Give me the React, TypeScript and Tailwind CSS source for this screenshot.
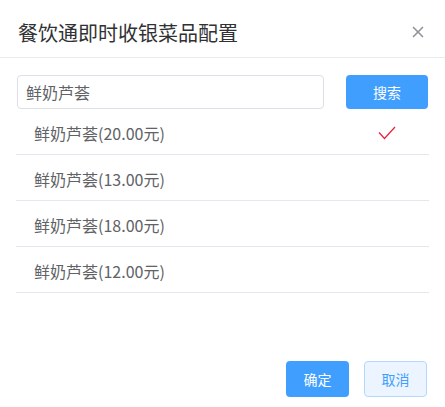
import { X } from "lucide-react";

const dishes = [
  { id: 1, name: "鲜奶芦荟", price: "20.00", checked: true },
  { id: 2, name: "鲜奶芦荟", price: "13.00", checked: false },
  { id: 3, name: "鲜奶芦荟", price: "18.00", checked: false },
  { id: 4, name: "鲜奶芦荟", price: "12.00", checked: false },
];

const font = { fontFamily: '"Noto Sans CJK SC", "Noto Sans", sans-serif' };

export default function App() {
  return (
    <div className="flex h-[407px] w-[445px] flex-col bg-white" style={font}>
      {/* Header */}
      <div className="flex items-start justify-between border-b border-[#e8eaef] pt-[19px] pb-[10px] pl-[18px] pr-[18px]">
        <h1 className="text-[20px] leading-[28px] text-[#303133]">
          餐饮通即时收银菜品配置
        </h1>
        <X className="mt-[4px] h-[18px] w-[18px] text-[#909399]" strokeWidth={2.2} />
      </div>

      {/* Search */}
      <div className="flex items-center gap-[22px] px-[17px] pt-[17px]">
        <div className="flex h-[34px] flex-1 items-center rounded border border-[#dcdfe6] px-[8px] text-[16px] text-[#606266]">
          鲜奶芦荟
        </div>
        <button className="h-[34px] w-[82px] rounded bg-[#409eff] text-[14px] text-white">
          搜索
        </button>
      </div>

      {/* List */}
      <ul className="px-[16px]">
        {dishes.map((d) => (
          <li
            key={d.id}
            className="flex h-[46px] items-center justify-between border-b border-[#e4e7ed] pl-[18px] pr-[33px] pt-[3px] text-[16px] text-[#606266]"
          >
            <span>
              {d.name}({d.price}元)
            </span>
            {d.checked && (
              <svg width="18" height="14" viewBox="0 0 18 14" fill="none">
                <path d="M1 6.5 L6.5 12.5 L17 1" stroke="#e8203f" strokeWidth="1.2" />
              </svg>
            )}
          </li>
        ))}
      </ul>

      {/* Footer */}
      <div className="mt-auto flex justify-end gap-[15px] pb-[10px] pr-[18px]">
        <button className="h-[36px] w-[63px] rounded bg-[#409eff] text-[14px] text-white">
          确定
        </button>
        <button className="h-[36px] w-[63px] rounded border border-[#b3d8ff] bg-[#ecf5ff] text-[14px] text-[#409eff]">
          取消
        </button>
      </div>
    </div>
  );
}
